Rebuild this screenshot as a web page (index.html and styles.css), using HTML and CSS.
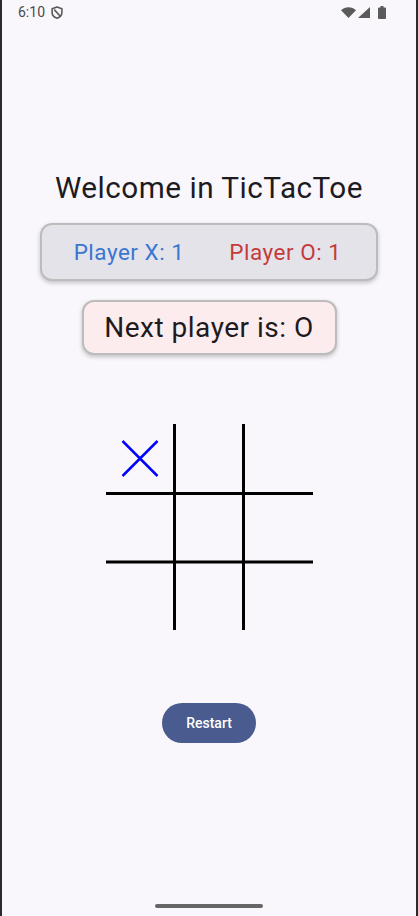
FILE: index.html
```html
<!DOCTYPE html>
<html lang="en">
<head>
<meta charset="utf-8">
<title>TicTacToe</title>
<link rel="stylesheet" href="styles.css">
</head>
<body>
<div class="screen">
  <div class="status-bar">
    <div class="status-left">
      <span class="time">6:10</span>
      <svg class="shield" width="12" height="13" viewBox="0 0 12 13" aria-hidden="true">
        <path d="M6 0.9 L10.9 2.8 V6.3 C10.9 9.3 8.8 11.4 6 12.2 C3.2 11.4 1.1 9.3 1.1 6.3 V2.8 Z" fill="none" stroke="#5a5a5a" stroke-width="1.6" stroke-linejoin="round"/>
        <path d="M3.3 3.6 L9 10" stroke="#5a5a5a" stroke-width="1.6"/>
      </svg>
    </div>
    <div class="status-right">
      <svg width="15" height="11" viewBox="0 0 15 11" aria-hidden="true">
        <path d="M0 3.2 C4.2 -0.9 10.8 -0.9 15 3.2 L7.5 11 Z" fill="#5a5a5a"/>
      </svg>
      <svg width="12" height="11" viewBox="0 0 12 11" aria-hidden="true">
        <path d="M12 0 V11 H0 Z" fill="#5a5a5a"/>
      </svg>
      <svg class="battery" width="8" height="13" viewBox="0 0 8 13" aria-hidden="true">
        <rect x="2.5" y="0" width="3" height="2" fill="#5a5a5a"/>
        <rect x="0" y="1.5" width="8" height="11.5" rx="1" fill="#5a5a5a"/>
      </svg>
    </div>
  </div>

  <main class="content">
    <h1 class="title">Welcome in TicTacToe</h1>

    <div class="card score-card">
      <span class="score score-x">Player X: 1</span>
      <span class="score score-o">Player O: 1</span>
    </div>

    <div class="card next-card">Next player is: O</div>

    <svg class="board" width="207" height="206" viewBox="0 0 207 206" aria-label="Board">
      <g stroke="#000" stroke-width="3">
        <line x1="68.5" y1="0" x2="68.5" y2="206"/>
        <line x1="137.5" y1="0" x2="137.5" y2="206"/>
        <line x1="0" y1="69.5" x2="207" y2="69.5"/>
        <line x1="0" y1="138" x2="207" y2="138"/>
      </g>
      <g stroke="#0000ff" stroke-width="2.5">
        <line x1="16.5" y1="17" x2="51.5" y2="52"/>
        <line x1="51.5" y1="17" x2="16.5" y2="52"/>
      </g>
    </svg>

    <button class="restart" type="button">Restart</button>
  </main>

  <div class="nav-handle"></div>
</div>
</body>
</html>
```

FILE: styles.css
```css
html, body {
  margin: 0;
  padding: 0;
  background: #2b2b2f;
}

.screen {
  margin: 0 2px;
  height: 916px;
  background: #faf7fc;
  display: flex;
  flex-direction: column;
  font-family: Roboto, "Noto Sans", sans-serif;
  color: #1d1b20;
}

.status-bar {
  height: 24px;
  display: flex;
  align-items: center;
  justify-content: space-between;
  padding: 0 30px 0 16px;
}

.status-left {
  display: flex;
  align-items: center;
  gap: 6px;
}

.time {
  font-size: 14px;
  color: #4a4a4a;
  line-height: 24px;
}

.status-right {
  display: flex;
  align-items: center;
  gap: 2px;
}

.battery {
  margin-left: 6px;
}

.content {
  display: flex;
  flex-direction: column;
  align-items: center;
}

.title {
  margin: 147px 0 0;
  font-size: 29.7px;
  letter-spacing: 0.5px;
  line-height: 34px;
  font-weight: 400;
}

.card {
  box-sizing: border-box;
  border: 2px solid #bcbcbc;
  border-radius: 12px;
  box-shadow: 0 2px 4px rgba(0, 0, 0, 0.22);
  display: flex;
  align-items: center;
  justify-content: center;
}

.score-card {
  margin-top: 18px;
  width: 338px;
  height: 58px;
  background: #e4e3ea;
  gap: 45px;
  padding-right: 3px;
}

.score {
  font-size: 22.5px;
  letter-spacing: 0.5px;
}

.score-x { color: #3a77d0; }
.score-o { color: #c53b3b; }

.next-card {
  margin-top: 19px;
  width: 255px;
  height: 55px;
  background: #fdecee;
  font-size: 28px;
  letter-spacing: 0.5px;
}

.board {
  margin-top: 69px;
  display: block;
}

.restart {
  margin-top: 73px;
  width: 94px;
  height: 40px;
  border: none;
  border-radius: 20px;
  background: #4a5b8f;
  color: #ffffff;
  font-family: Roboto, "Noto Sans", sans-serif;
  font-size: 14px;
  font-weight: 500;
}

.nav-handle {
  margin: auto auto 8px;
  width: 108px;
  height: 4px;
  border-radius: 2px;
  background: #666666;
}
```
